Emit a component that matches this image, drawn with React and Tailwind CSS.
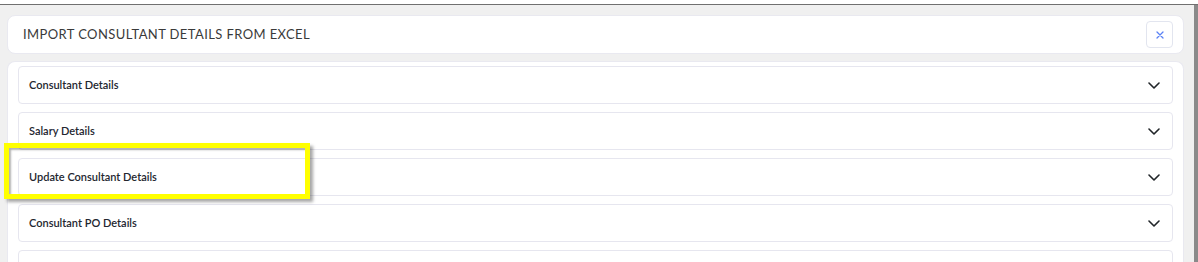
import React from 'react';

const sections = [
  'Consultant Details',
  'Salary Details',
  'Update Consultant Details',
  'Consultant PO Details',
  '',
];

function Chevron() {
  return (
    <svg width="12" height="7" viewBox="0 0 12 7" fill="none" className="shrink-0">
      <path d="M1 1l5 5 5-5" stroke="#212529" strokeWidth="1.6" strokeLinecap="round" strokeLinejoin="round" />
    </svg>
  );
}

function AccordionItem({ title }) {
  return (
    <div className="h-[38px] shrink-0 flex items-center justify-between pl-[10px] pr-[12px] bg-white border border-[#e6e6ef] rounded-[4px]">
      <span className="text-[11px] font-semibold text-[#23262f]">{title}</span>
      <Chevron />
    </div>
  );
}

export default function App() {
  return (
    <div className="w-[1198px] h-[262px] overflow-hidden bg-white pt-[4px] font-['Lato',sans-serif]">
      <div className="relative h-full flex border-t border-[#707070]">
        <div className="flex-1 bg-[#f0f0f0] pl-[7px] pr-[10px] pt-[10px] flex flex-col gap-[7px]">
          {/* Modal header */}
          <div className="h-[39px] shrink-0 bg-white rounded-[8px] border border-[#e9e9f0] flex items-center justify-between pl-[15px] pr-[10px]">
            <h1 className="text-[13px] text-[#3a3a3a] tracking-[0.4px]">IMPORT CONSULTANT DETAILS FROM EXCEL</h1>
            <button className="w-[27px] h-[27px] flex items-center justify-center border border-[#e2e5ef] rounded-[4px] bg-white">
              <svg width="8" height="8" viewBox="0 0 8 8">
                <path d="M1 1l6 6M7 1L1 7" stroke="#5b82f5" strokeWidth="1.3" strokeLinecap="round" />
              </svg>
            </button>
          </div>

          {/* Sections */}
          <div className="flex-1 bg-white rounded-t-[8px] border border-b-0 border-[#e9e9f0] px-[10px] pt-[4px] flex flex-col gap-[8px]">
            {sections.map((s, i) => (
              <AccordionItem key={i} title={s} />
            ))}
          </div>
        </div>
        <div className="w-[4px] bg-[#8a8a8a]" />

        {/* highlight annotation */}
        <div className="absolute left-[4px] top-[138px] w-[306px] h-[56px] border-[5px] border-[#ffff00] shadow-[3px_3px_3px_rgba(0,0,0,0.35),inset_2px_2px_2px_rgba(0,0,0,0.3)] pointer-events-none" />
      </div>
    </div>
  );
}
